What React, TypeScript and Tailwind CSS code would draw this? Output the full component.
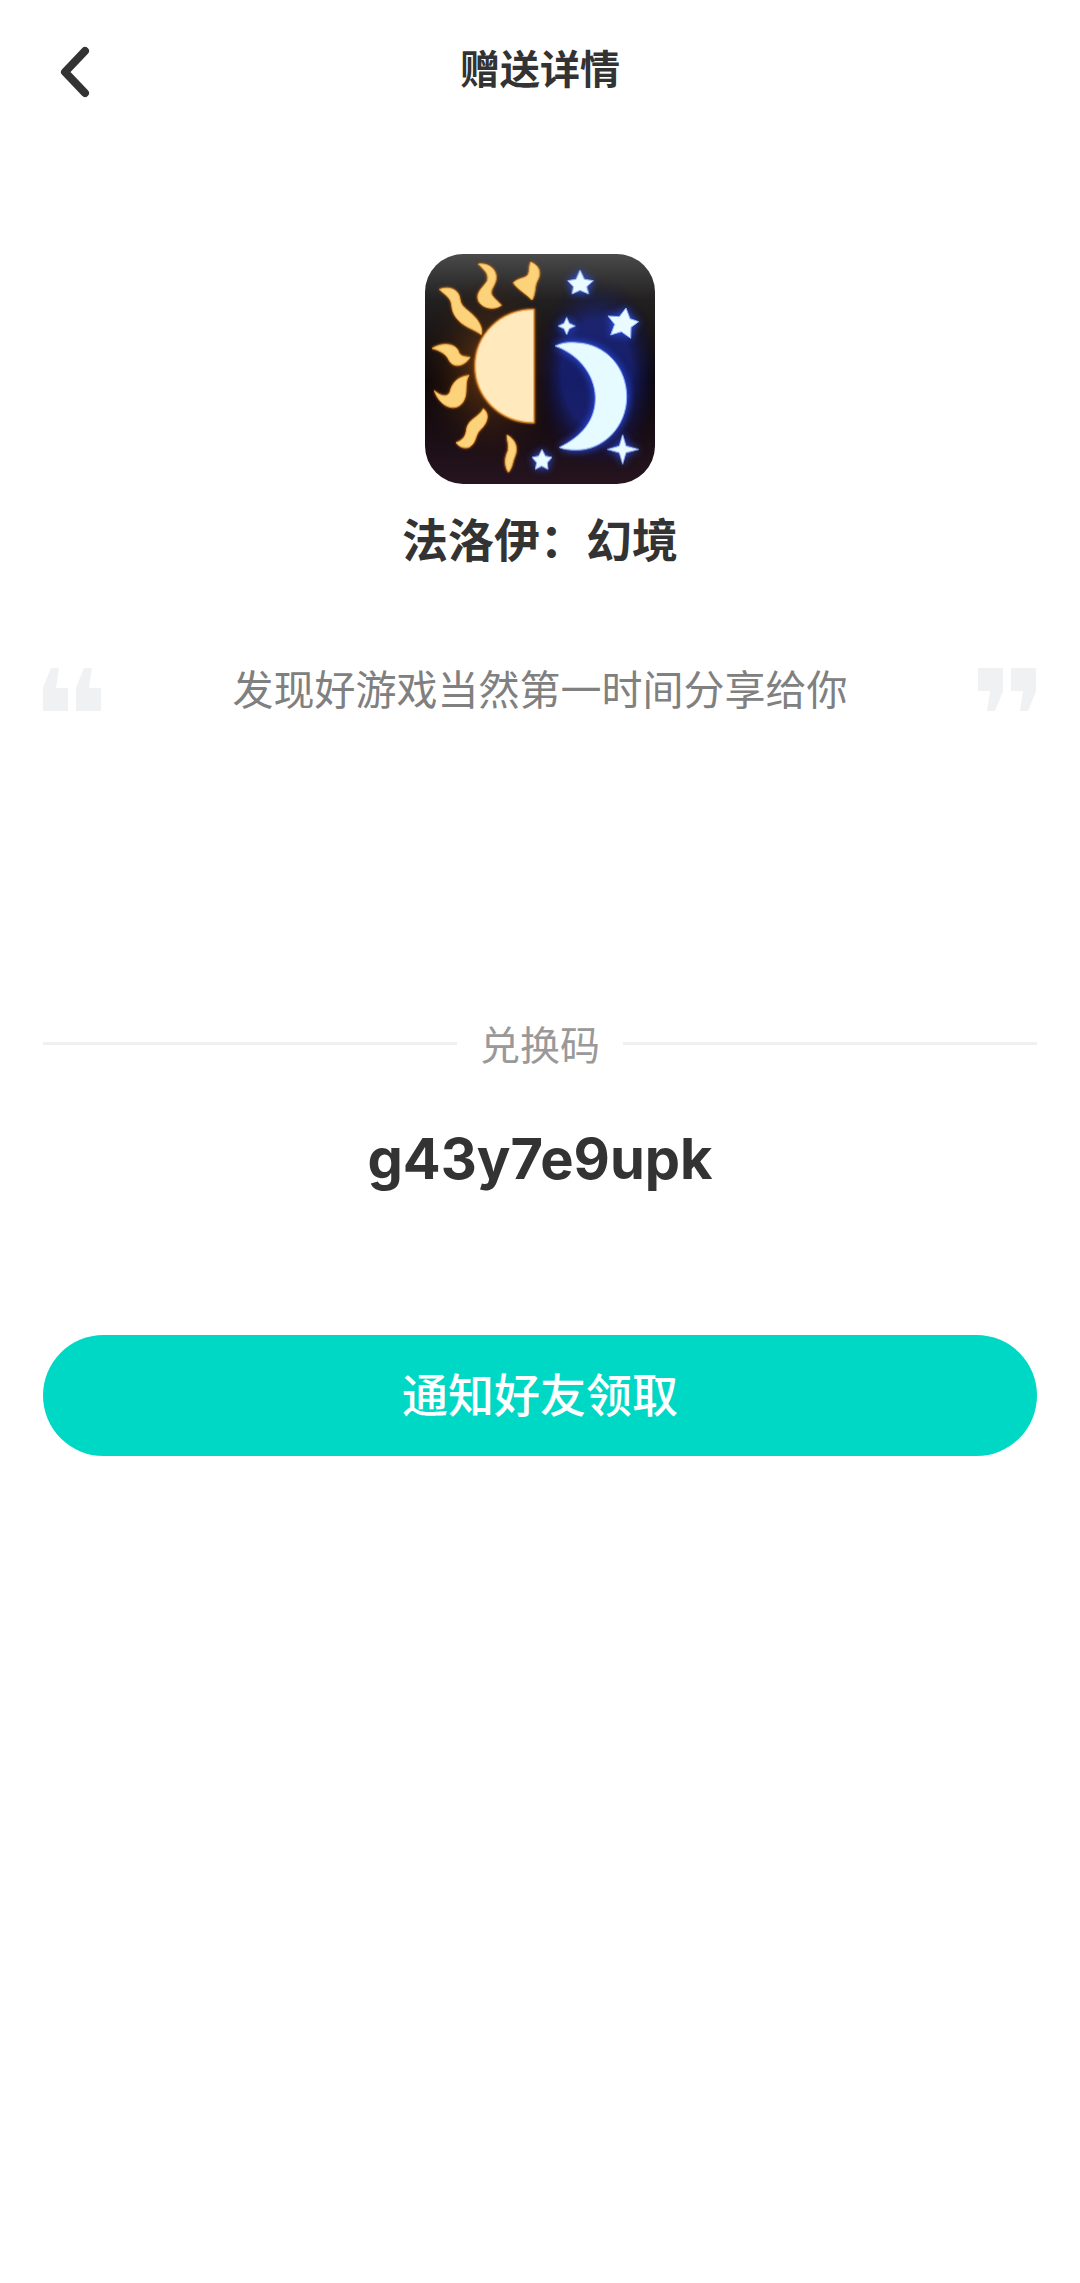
const cjk = "font-['Noto_Sans_CJK_SC','Noto_Sans',sans-serif]"

const Flame = ({ d }: { d: string }) => (
  <path d={d} fill="#fcd27a" stroke="#f0a63e" strokeWidth="3" filter="url(#sunGlow)" />
)

const Star = ({ d }: { d: string }) => (
  <path d={d} fill="#e9fbff" stroke="#8fb0ff" strokeWidth="3" filter="url(#moonGlow)" />
)

const GameIcon = () => (
  <svg viewBox="75 42 690 690" className="h-[230px] w-[230px] rounded-[38px]">
    <defs>
      <linearGradient id="iconBase" x1="0" y1="0" x2="0" y2="1">
        <stop offset="0" stopColor="#4a4a4a" />
        <stop offset="0.2" stopColor="#222020" />
        <stop offset="0.55" stopColor="#0c0709" />
        <stop offset="1" stopColor="#26141f" />
      </linearGradient>
      <radialGradient id="warm" cx="0.5" cy="0.5" r="0.5">
        <stop offset="0" stopColor="#7a4416" stopOpacity="0.9" />
        <stop offset="1" stopColor="#2a1408" stopOpacity="0" />
      </radialGradient>
      <radialGradient id="cool" cx="0.5" cy="0.5" r="0.5">
        <stop offset="0.55" stopColor="#1c2ca8" stopOpacity="0.6" />
        <stop offset="1" stopColor="#0a0a40" stopOpacity="0" />
      </radialGradient>
      <filter id="sunGlow" x="-40%" y="-40%" width="180%" height="180%">
        <feDropShadow dx="0" dy="0" stdDeviation="5" floodColor="#d9701a" floodOpacity="0.8" />
      </filter>
      <filter id="moonGlow" x="-60%" y="-60%" width="220%" height="220%">
        <feDropShadow dx="0" dy="0" stdDeviation="12" floodColor="#2f56ff" />
      </filter>
      <filter id="soft">
        <feGaussianBlur stdDeviation="1.4" />
      </filter>
    </defs>
    <rect x="75" y="42" width="690" height="690" fill="url(#iconBase)" />
    <ellipse cx="270" cy="390" rx="220" ry="290" fill="url(#warm)" />
    <ellipse cx="590" cy="400" rx="190" ry="290" fill="url(#cool)" />
    <g filter="url(#soft)">
      <path d="M402 208 C300 208 225 285 225 378 C225 472 300 548 402 548 Z" fill="#ffe9bd" stroke="#e8922c" strokeWidth="4" filter="url(#sunGlow)" />
      <Flame d="M235 72 C268 68 292 90 288 118 C284 140 268 150 276 166 C284 178 296 186 304 196 C285 210 250 208 236 184 C224 158 252 140 262 122 C268 100 250 88 235 72 Z" />
      <Flame d="M392 66 C420 78 424 100 412 122 C402 140 408 158 396 180 C380 162 350 146 340 128 C358 112 376 116 384 104 C390 92 386 80 392 66 Z" />
      <Flame d="M118 148 C150 136 178 150 180 178 C182 204 212 212 232 240 C242 256 248 268 244 284 C222 266 190 262 168 232 C150 206 160 192 148 176 C140 164 128 158 118 148 Z" />
      <Flame d="M96 325 C130 304 170 312 176 336 C180 350 196 350 210 352 C192 380 160 384 148 362 C140 342 118 330 96 325 Z" />
      <Flame d="M207 406 C192 426 204 456 192 480 C176 516 124 510 103 452 C122 468 142 474 150 456 C156 430 172 410 207 406 Z" />
      <Flame d="M250 506 C272 524 260 552 240 570 C224 586 230 610 206 622 C190 626 178 620 168 608 C190 600 198 588 200 566 C206 536 238 532 250 506 Z" />
      <Flame d="M321 585 C345 598 356 622 344 650 C336 670 338 680 325 697 C310 672 316 650 324 632 C328 612 320 600 321 585 Z" />
      <path d="M465 318 C490 306 512 306 530 308 C620 312 680 385 680 470 C680 560 610 630 530 630 C510 630 490 628 478 622 C545 590 588 540 586 470 C584 400 530 340 465 318 Z" fill="#e6fbff" stroke="#8fb0ff" strokeWidth="3" filter="url(#moonGlow)" />
      <Star d="M540 90 L553 118 L580 122 L560 140 L566 162 L540 151 L516 162 L520 140 L503 122 L528 118 Z" />
      <Star d="M678 204 L690 236 L716 245 L693 262 L692 295 L664 275 L632 285 L644 253 L624 228 L658 230 Z" />
      <Star d="M500 232 L508 250 L526 258 L508 266 L500 284 L492 266 L474 258 L492 250 Z" />
      <Star d="M426 628 L436 648 L456 652 L442 668 L444 688 L425 678 L406 688 L410 668 L396 652 L416 648 Z" />
      <Star d="M668 584 L678 618 L716 628 L678 638 L668 672 L658 638 L622 628 L658 618 Z" />
    </g>
  </svg>
)

const QuoteMark = ({ closing = false }: { closing?: boolean }) => (
  <svg width="59" height="44" viewBox="0 0 59 44" fill="#f0f1f3" className="mt-[6px]">
    {closing ? (
      <>
        <path d="M0 0H25V23L17 43H9L12 23H0Z" />
        <path d="M33 0H58V23L50 43H42L45 23H33Z" />
      </>
    ) : (
      <>
        <path d="M25 43H0V20L8 0H16L13 20H25Z" />
        <path d="M58 43H33V20L41 0H49L46 20H58Z" />
      </>
    )}
  </svg>
)

const App = () => {
  return (
    <div className={`flex min-h-[2283px] w-[1080px] flex-col items-center bg-white ${cjk}`}>
      <header className="relative flex h-[134px] w-full items-center justify-center">
        <button className="absolute left-[56px] top-[44px]">
          <svg width="36" height="56" viewBox="0 0 36 56" fill="none">
            <path d="M29 7 L9 28 L29 49" stroke="#333333" strokeWidth="8" strokeLinecap="round" strokeLinejoin="round" />
          </svg>
        </button>
        <h1 className="text-[40px] font-bold leading-none text-[#333333]">赠送详情</h1>
      </header>

      <div className="mt-[120px]">
        <GameIcon />
      </div>
      <h2 className="mt-[25px] text-[46px] font-bold leading-[56px] text-[#333333]">法洛伊：幻境</h2>

      <section className="mt-[92px] flex h-[60px] w-full items-center justify-between px-[43px]">
        <QuoteMark />
        <p className="text-[41px] leading-none text-[#808080]">发现好游戏当然第一时间分享给你</p>
        <QuoteMark closing />
      </section>

      <div className="mt-[301px] flex w-full items-center px-[43px]">
        <div className="h-[3px] flex-1 bg-[#f0f0f0]" />
        <span className="mx-[23px] text-[40px] leading-[50px] text-[#999999]">兑换码</span>
        <div className="h-[3px] flex-1 bg-[#f0f0f0]" />
      </div>

      <p className="mt-[56px] font-['Inter',sans-serif] text-[56px] font-bold leading-[70px] text-[#333333]">g43y7e9upk</p>

      <div className="mt-[141px] w-full px-[43px]">
        <button className="h-[121px] w-full rounded-full bg-[#00d8c6] pb-[6px] text-[46px] font-medium text-white">
          通知好友领取
        </button>
      </div>
    </div>
  )
}

export default App
